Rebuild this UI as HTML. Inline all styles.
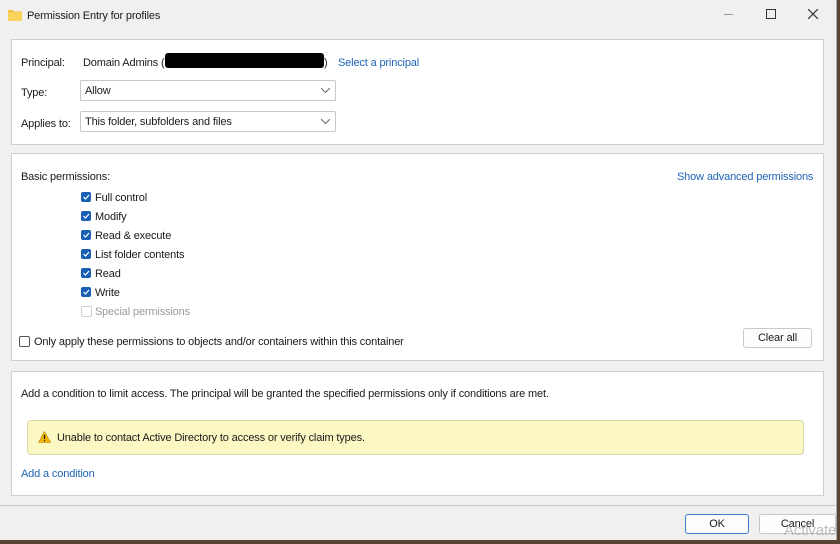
<!DOCTYPE html>
<html><head><style>
body{margin:0;width:840px;height:544px;background:#5a4535;font-family:"Liberation Sans",sans-serif;font-size:11px;letter-spacing:-0.15px;color:#1a1a1a;position:relative;overflow:hidden}
.win{position:absolute;left:0;top:0;width:836px;height:540px;background:#f0f0f0;border-right:1px solid #aaa}
.p{position:absolute;background:#fff;border:1px solid #cfcfcf}
.a{position:absolute;white-space:nowrap}
.link{color:#1f64b4}
.sel{position:absolute;background:#fff;border:1px solid #c8c8c8;border-radius:2px;height:19px}
.sel span{position:absolute;left:4px;top:4px}
.sel svg{position:absolute;right:5px;top:7px}
.cb{position:absolute;width:10px;height:10px;background:#1a5fb4;border-radius:2px}
.cb svg{position:absolute;left:1px;top:1px}
.btn{position:absolute;background:#fdfdfd;border:1px solid #c8c8c8;border-radius:3px;text-align:center;line-height:18px}
</style></head><body>
<div class="win">
<svg class="a" style="left:8px;top:9px" width="14" height="12"><path d="M0 1h5l1 1.5h8V12H0z" fill="#f4c242"/><rect x="0" y="3.5" width="14" height="8.5" fill="#fbd25c"/></svg>
<div class="a" style="left:27px;top:10px;font-size:11px">Permission Entry for profiles</div>
<div class="a" style="left:724px;top:14px;width:9px;height:1px;background:#999"></div>
<div class="a" style="left:766px;top:9px;width:8px;height:8px;border:1px solid #333"></div>
<svg class="a" style="left:808px;top:9px" width="10" height="10"><path d="M0 0L10 10M10 0L0 10" stroke="#333" stroke-width="1.2"/></svg>

<div class="p" style="left:11px;top:39px;width:811px;height:104px"></div>
<div class="a" style="left:21px;top:57px">Principal:</div>
<div class="a" style="left:83px;top:57px">Domain Admins (</div>
<div class="a" style="left:165px;top:53px;width:159px;height:15px;background:#000;border-radius:3px"></div>
<div class="a" style="left:324px;top:57px">)</div>
<div class="a link" style="left:338px;top:57px">Select a principal</div>
<div class="a" style="left:21px;top:87px">Type:</div>
<div class="sel" style="left:80px;top:80px;width:254px"><span>Allow</span><svg width="9" height="5"><path d="M0 0l4.5 4.5L9 0" fill="none" stroke="#666"/></svg></div>
<div class="a" style="left:21px;top:118px">Applies to:</div>
<div class="sel" style="left:80px;top:111px;width:254px"><span>This folder, subfolders and files</span><svg width="9" height="5"><path d="M0 0l4.5 4.5L9 0" fill="none" stroke="#666"/></svg></div>

<div class="p" style="left:11px;top:153px;width:811px;height:206px"></div>
<div class="a" style="left:21px;top:171px">Basic permissions:</div>
<div class="a link" style="left:677px;top:171px">Show advanced permissions</div>
<div class="cb" style="left:81px;top:192px"><svg width="8" height="8"><path d="M1.5 4l2 2L7 2" fill="none" stroke="#fff" stroke-width="1.2"/></svg></div><div class="a" style="left:95px;top:192px">Full control</div>
<div class="cb" style="left:81px;top:211px"><svg width="8" height="8"><path d="M1.5 4l2 2L7 2" fill="none" stroke="#fff" stroke-width="1.2"/></svg></div><div class="a" style="left:95px;top:211px">Modify</div>
<div class="cb" style="left:81px;top:230px"><svg width="8" height="8"><path d="M1.5 4l2 2L7 2" fill="none" stroke="#fff" stroke-width="1.2"/></svg></div><div class="a" style="left:95px;top:230px">Read &amp; execute</div>
<div class="cb" style="left:81px;top:249px"><svg width="8" height="8"><path d="M1.5 4l2 2L7 2" fill="none" stroke="#fff" stroke-width="1.2"/></svg></div><div class="a" style="left:95px;top:249px">List folder contents</div>
<div class="cb" style="left:81px;top:268px"><svg width="8" height="8"><path d="M1.5 4l2 2L7 2" fill="none" stroke="#fff" stroke-width="1.2"/></svg></div><div class="a" style="left:95px;top:268px">Read</div>
<div class="cb" style="left:81px;top:287px"><svg width="8" height="8"><path d="M1.5 4l2 2L7 2" fill="none" stroke="#fff" stroke-width="1.2"/></svg></div><div class="a" style="left:95px;top:287px">Write</div>
<div class="a" style="left:81px;top:306px;width:9px;height:9px;border:1px solid #d0d0d0;border-radius:2px"></div><div class="a" style="left:95px;top:306px;color:#9a9a9a">Special permissions</div>
<div class="a" style="left:19px;top:336px;width:9px;height:9px;border:1px solid #555;border-radius:2px"></div>
<div class="a" style="left:34px;top:336px">Only apply these permissions to objects and/or containers within this container</div>
<div class="btn" style="left:743px;top:328px;width:67px">Clear all</div>

<div class="p" style="left:11px;top:371px;width:811px;height:123px"></div>
<div class="a" style="left:21px;top:388px">Add a condition to limit access. The principal will be granted the specified permissions only if conditions are met.</div>
<div class="a" style="left:27px;top:420px;width:775px;height:33px;background:#fbf8c4;border:1px solid #d8d6a8;border-radius:4px"></div>
<svg class="a" style="left:38px;top:431px" width="13" height="12"><path d="M6.5 0.5L12.5 11.5H0.5z" fill="#f2b600" stroke="#b78600" stroke-width=".6"/><path d="M6.5 4v4" stroke="#222" stroke-width="1.3"/><circle cx="6.5" cy="9.7" r=".7" fill="#222"/></svg>
<div class="a" style="left:57px;top:432px">Unable to contact Active Directory to access or verify claim types.</div>
<div class="a link" style="left:21px;top:468px">Add a condition</div>

<div class="a" style="left:0;top:505px;width:836px;height:1px;background:#c8c8c8"></div>
<div class="btn" style="left:685px;top:514px;width:62px;border:1px solid #3b7bd0">OK</div>
<div class="btn" style="left:759px;top:514px;width:75px">Cancel</div>
<div class="a" style="left:784px;top:522px;font-size:15px;color:rgba(150,150,150,.6)">Activate</div>
</div>
</body></html>
